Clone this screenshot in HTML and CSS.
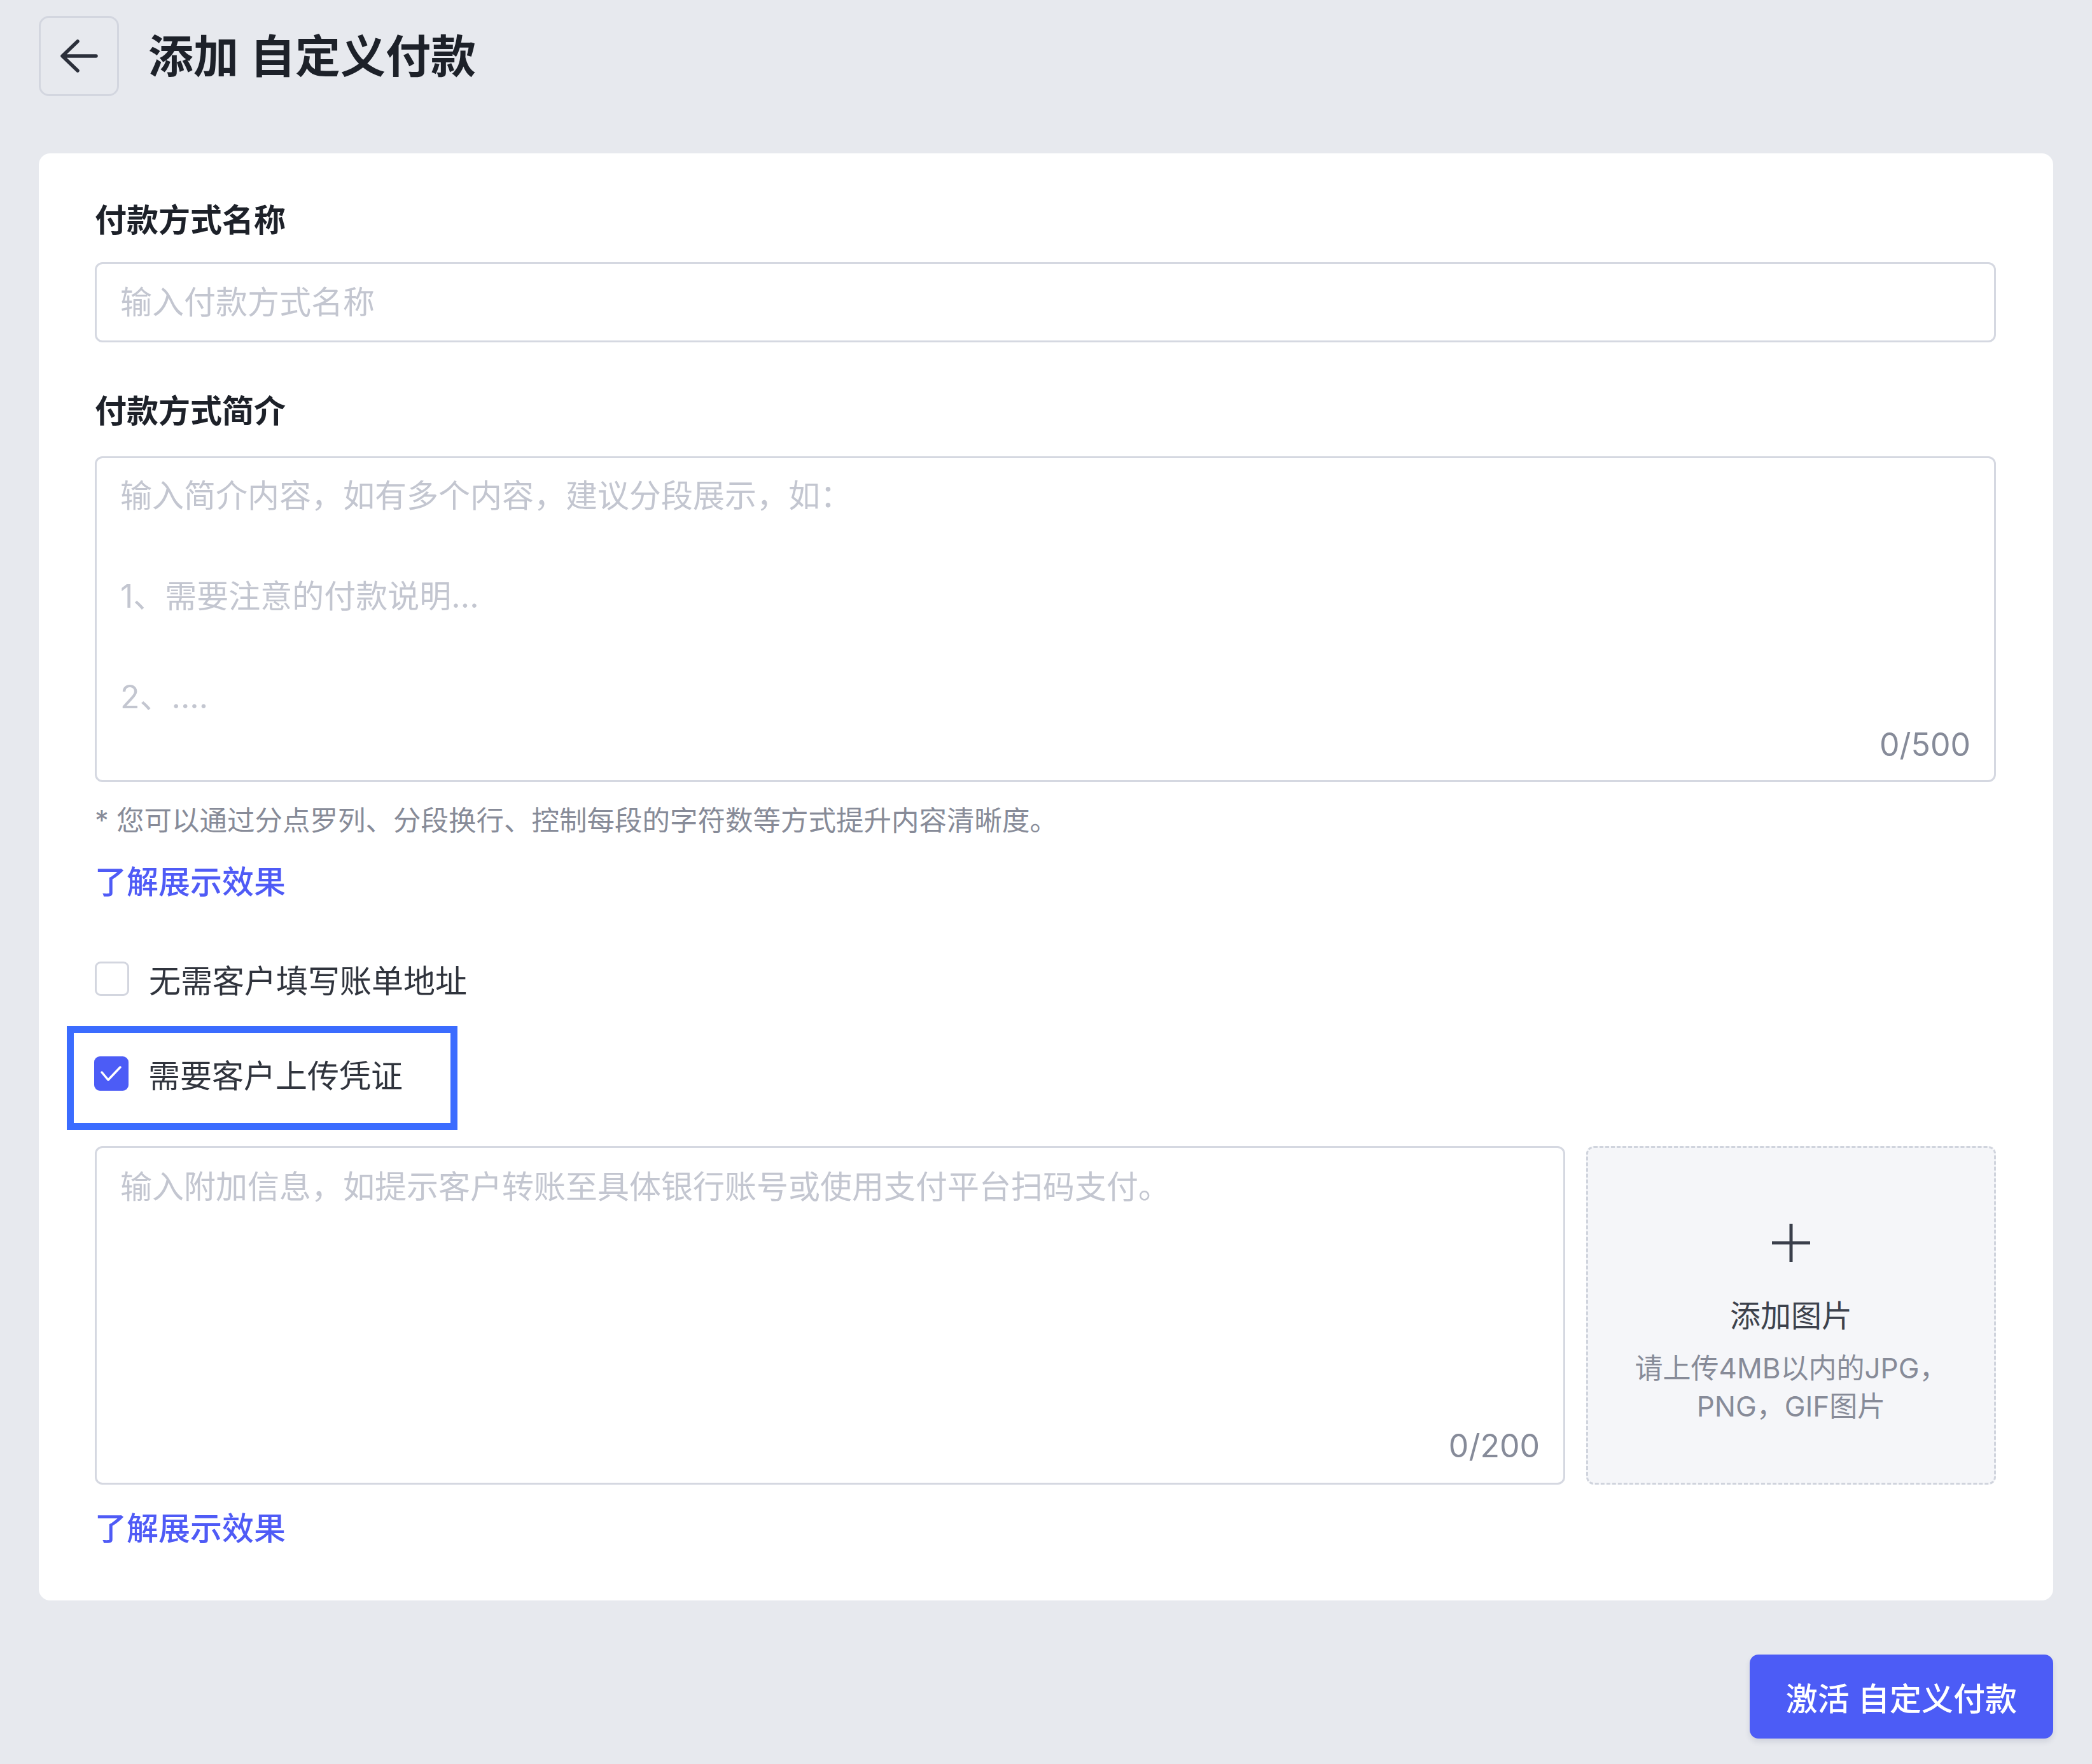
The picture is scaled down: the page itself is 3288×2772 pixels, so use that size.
FILE: index.html
```html
<!DOCTYPE html>
<html lang="zh-CN">
<head>
<meta charset="utf-8">
<title>添加 自定义付款</title>
<link rel="stylesheet" href="styles.css">
</head>
<body>
<div class="page">
  <header class="header">
    <button class="back-btn" aria-label="返回">
      <svg class="back-icon" viewBox="0 0 60 52" width="60" height="52"><path d="M57 26H4M28 3L4 26l24 23" fill="none" stroke="#2b2f3a" stroke-width="5.5" stroke-linecap="round" stroke-linejoin="round"/></svg>
    </button>
    <h1 class="title">添加 自定义付款</h1>
  </header>

  <main class="card">
    <div class="label">付款方式名称</div>
    <div class="input"><span class="placeholder">输入付款方式名称</span></div>

    <div class="label label-2">付款方式简介</div>
    <div class="textarea textarea-intro">
      <div class="placeholder multiline">输入简介内容，如有多个内容，建议分段展示，如：<br><br>1、需要注意的付款说明...<br><br>2、....</div>
      <div class="counter">0/500</div>
    </div>
    <p class="hint">* 您可以通过分点罗列、分段换行、控制每段的字符数等方式提升内容清晰度。</p>
    <a class="link" href="#">了解展示效果</a>

    <label class="check-row">
      <span class="checkbox"></span>
      <span class="check-text">无需客户填写账单地址</span>
    </label>

    <div class="highlight">
      <label class="check-row">
        <span class="checkbox checked"><svg viewBox="0 0 54 54" width="54" height="54"><path d="M12 25L22 37L41 17" fill="none" stroke="#fff" stroke-width="3.5" stroke-linecap="round" stroke-linejoin="round"/></svg></span>
        <span class="check-text">需要客户上传凭证</span>
      </label>
    </div>

    <div class="attach-row">
      <div class="textarea textarea-extra">
        <div class="placeholder multiline">输入附加信息，如提示客户转账至具体银行账号或使用支付平台扫码支付。</div>
        <div class="counter">0/200</div>
      </div>
      <div class="upload">
        <svg class="plus" viewBox="0 0 62 62" width="62" height="62"><path d="M31 1V61M1 31H61" fill="none" stroke="#3a3f4b" stroke-width="5"/></svg>
        <div class="upload-title">添加图片</div>
        <div class="upload-hint">请上传4MB以内的JPG，<br>PNG，GIF图片</div>
      </div>
    </div>
    <a class="link link-2" href="#">了解展示效果</a>
  </main>

  <footer class="footer">
    <button class="primary-btn">激活 自定义付款</button>
  </footer>
</div>
</body>
</html>
```

FILE: styles.css
```css
* { box-sizing: border-box; }
html, body { margin: 0; padding: 0; }
body {
  background: #e7e9ee;
  font-family: Inter, "Noto Sans CJK SC", sans-serif;
  color: #1f2329;
}
.page { padding: 25px 61px 40px; }

.header { display: flex; align-items: center; gap: 46px; height: 126px; }
.back-btn {
  width: 126px; height: 126px; padding: 0;
  border: 3px solid #d3d6df; border-radius: 16px;
  background: transparent;
  display: flex; align-items: center; justify-content: center;
}
.title { margin: 0; font-size: 71px; font-weight: 600; line-height: 1; color: #1d2129; }

.card {
  margin-top: 90px;
  background: #fff;
  border-radius: 18px;
  padding: 70px 90px 78px 88px;
}
.label { font-size: 50px; line-height: 70px; font-weight: 600; margin-bottom: 31px; color: #1d2129; }
.label-2 { margin-top: 73px; margin-bottom: 36px; }

.input {
  height: 126px;
  border: 3px solid #d5d8e1; border-radius: 12px;
  padding: 0 37px;
  display: flex; align-items: center;
}
.placeholder { font-size: 50px; line-height: 70px; color: #c3c6d0; }
.textarea {
  border: 3px solid #d5d8e1; border-radius: 12px;
  display: flex; flex-direction: column;
}
.textarea-intro { height: 512px; padding: 20px 37px 26px; }
.multiline { line-height: 79px; }
.counter {
  margin-top: auto; align-self: flex-end;
  font-size: 50px; line-height: 60px; color: #868b99;
}

.hint { margin: 29px 0 0; font-size: 43.5px; line-height: 62px; color: #878b98; }
.link {
  display: block; width: fit-content;
  margin-top: 31px;
  font-size: 50px; line-height: 70px; font-weight: 500;
  color: #4f5bf6; text-decoration: none;
}

.check-row {
  display: flex; align-items: center; gap: 31px;
  height: 70px; margin-top: 82px;
  font-size: 50px; color: #30343d;
}
.checkbox {
  width: 54px; height: 54px; flex: none;
  border: 3px solid #d3d6df; border-radius: 9px;
  background: #fff;
}
.checkbox.checked {
  border: none; background: #4c5cf6;
  display: flex;
}
.highlight {
  margin: 39px 0 0 -44px;
  width: 614px; height: 164px;
  border: 11px solid #3b6cff;
  padding: 0 0 14px 32px;
  display: flex; align-items: center;
}
.highlight .check-row { margin-top: 0; }

.attach-row { margin-top: 25px; display: flex; gap: 33px; height: 532px; }
.textarea-extra { flex: 1; padding: 22px 37px 28px; }
.upload {
  width: 644px; flex: none;
  background: #f5f6f9;
  border: 3px dashed #d0d4dd; border-radius: 12px;
  display: flex; flex-direction: column; align-items: center;
  padding-top: 118px;
  text-align: center;
}
.plus { display: block; }
.upload-title { margin-top: 52px; font-size: 48px; line-height: 64px; color: #3d424d; }
.upload-hint { margin-top: 20px; font-size: 44px; line-height: 60px; color: #878b98; }
.link-2 { margin-top: 34px; }

.footer { margin-top: 85px; display: flex; justify-content: flex-end; }
.primary-btn {
  height: 132px; padding: 0 57px;
  border: none; border-radius: 14px;
  background: #4c5cf6; color: #fff;
  font-family: inherit; font-size: 50px; font-weight: 500;
  box-shadow: 0 5px 8px rgba(40, 50, 90, 0.12);
}
```
